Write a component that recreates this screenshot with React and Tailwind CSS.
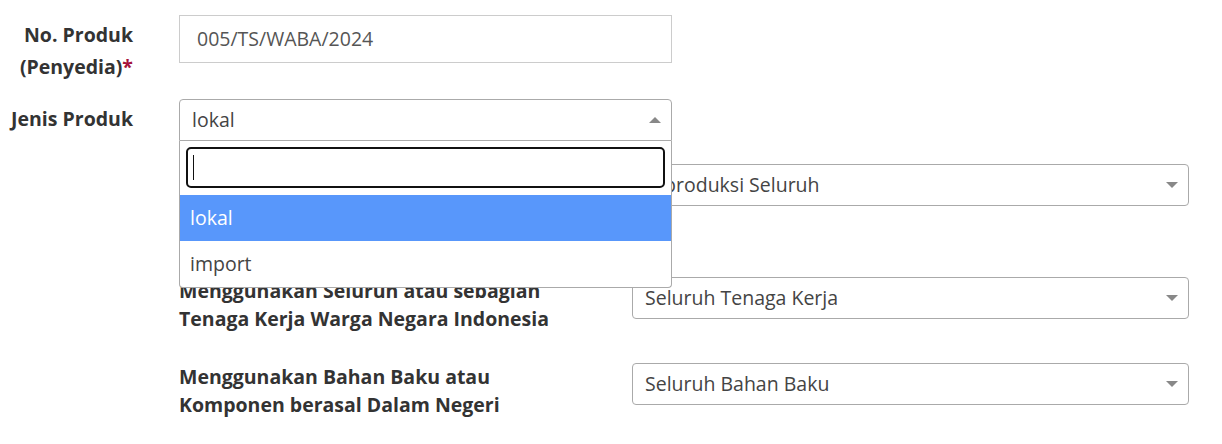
import React from "react";

const font = { fontFamily: '"Open Sans", "Noto Sans", sans-serif' };

function Caret({ up = false }) {
  return (
    <span
      className={`absolute right-[10px] top-1/2 -translate-y-1/2 h-0 w-0 border-x-[6px] border-x-transparent ${
        up ? "border-b-[6px] border-b-[#888]" : "border-t-[6px] border-t-[#888]"
      }`}
    />
  );
}

function Select({ value }) {
  return (
    <div className="relative flex h-[42px] w-[557px] items-center rounded-[4px] border border-[#aaa] bg-white pl-[12px] text-[19.5px] text-[#444]">
      {value}
      <Caret />
    </div>
  );
}

function Row({ label, value, className = "" }) {
  return (
    <div className={`flex items-start gap-[32px] ${className}`}>
      <div className="w-[421px] text-[19.5px] font-bold leading-[28px] text-[#333]">{label}</div>
      <Select value={value} />
    </div>
  );
}

export default function App() {
  return (
    <div className="relative min-h-[444px] w-[1222px] bg-white pt-[15px]" style={font}>
      {/* upper section, right aligned labels */}
      <div className="flex items-start gap-[46px]">
        <div className="w-[133px] shrink-0 whitespace-nowrap pt-[4px] text-right text-[19.5px] font-bold leading-[32px] text-[#333]">
          No. Produk
          <br />
          (Penyedia)<span className="text-[#a6133c]">*</span>
        </div>
        <div className="flex h-[48px] w-[493px] items-center border border-[#ccc] bg-white pl-[17px] text-[19.5px] text-[#555]">
          005/TS/WABA/2024
        </div>
      </div>

      <div className="mt-[16px] flex items-start gap-[46px]">
        <div className="w-[133px] shrink-0 whitespace-nowrap pt-[4px] text-right text-[19.5px] font-bold leading-[32px] text-[#333]">
          Jenis Produk
        </div>
        <div className="relative z-10 w-[493px]">
          <div className="relative flex h-[42px] items-center rounded-t-[4px] border border-[#aaa] bg-white pl-[12px] text-[19.5px] text-[#444]">
            lokal
            <Caret up />
          </div>
          {/* open dropdown */}
          <div className="absolute left-0 top-full w-full rounded-b-[4px] border border-t-0 border-[#aaa] bg-white">
            <div className="px-[6px] pb-[7px] pt-[6px]">
              <div className="flex h-[41px] items-center rounded-[5px] border-2 border-[#111] pl-[5px]">
                <span className="block h-[25px] w-px bg-[#111]" />
              </div>
            </div>
            <div className="flex h-[46px] items-center bg-[#5897fb] pl-[10px] text-[19.5px] text-white">lokal</div>
            <div className="flex h-[46px] items-center pl-[10px] text-[19.5px] text-[#444]">import</div>
          </div>
        </div>
      </div>

      {/* lower section */}
      <div className="mt-[23px] flex flex-col gap-[29px] pl-[179px]">
        <Row
          label={
            <>
              Diproduksi Seluruh atau Sebagian
              <br />
              Prosesnya di Dalam Negeri oleh
              <br />
              Perusahaan Dalam Negeri
            </>
          }
          value="Diproduksi Seluruh"
        />
        <Row
          label={
            <>
              Menggunakan Seluruh atau sebagian
              <br />
              Tenaga Kerja Warga Negara Indonesia
            </>
          }
          value="Seluruh Tenaga Kerja"
        />
        <Row
          className="mt-px"
          label={
            <>
              Menggunakan Bahan Baku atau
              <br />
              Komponen berasal Dalam Negeri
            </>
          }
          value="Seluruh Bahan Baku"
        />
      </div>
    </div>
  );
}
